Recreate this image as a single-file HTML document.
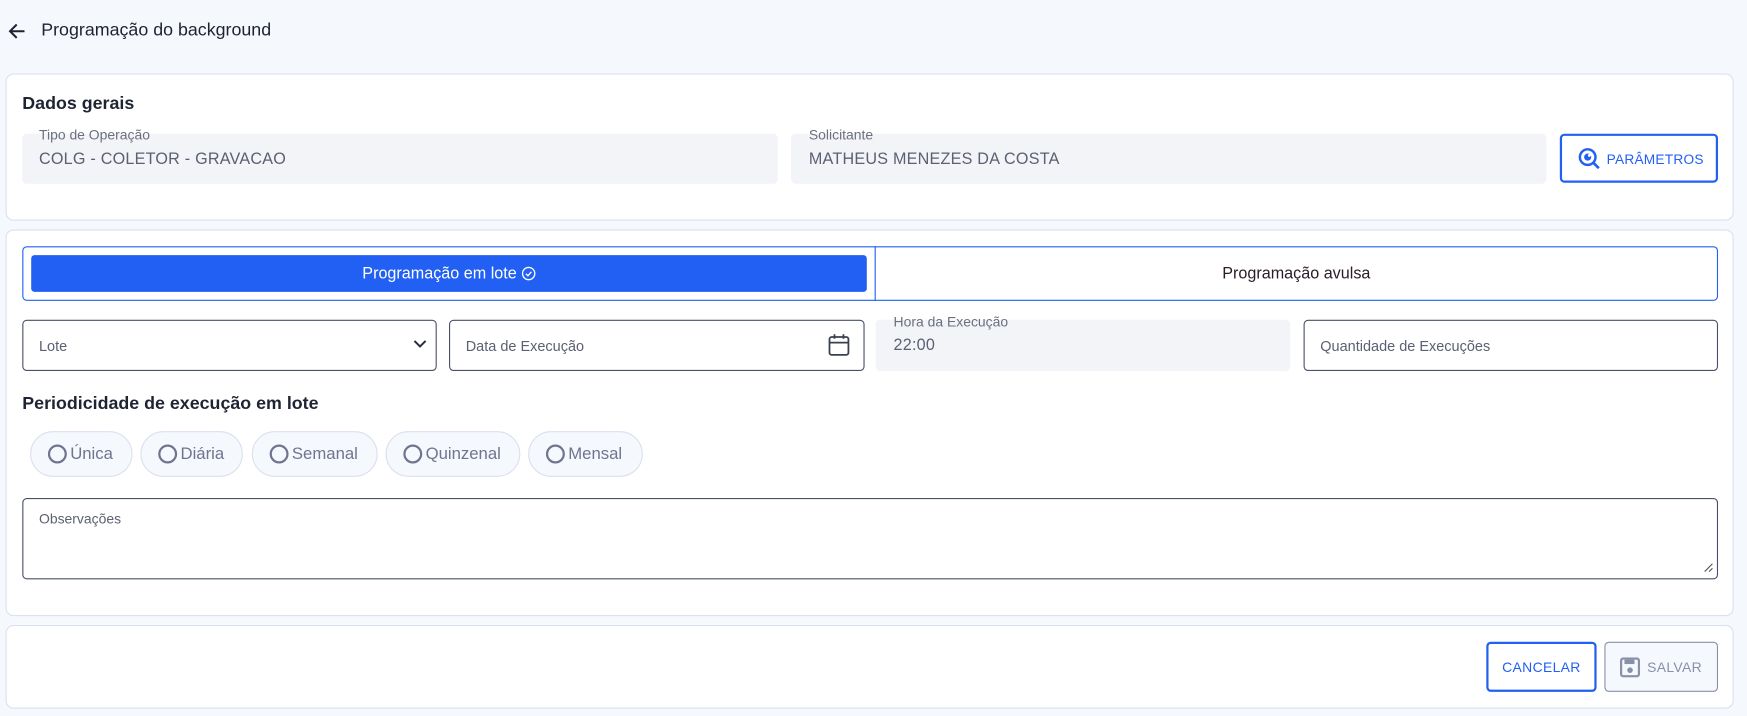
<!DOCTYPE html>
<html><head><meta charset="utf-8"><style>
*{box-sizing:border-box;margin:0;padding:0}
html,body{width:1747px;height:716px;overflow:hidden;background:#f5f8fd}
#w{position:absolute;left:0;top:0;width:1568px;height:643px;transform:scale(1.11416);transform-origin:0 0;font-family:"Liberation Sans",sans-serif;color:#1e2230}
.a{position:absolute}
.card{position:absolute;left:5px;width:1551px;background:#fff;border:1px solid #dbe1f0;border-radius:7px}
.h{font-size:16px;font-weight:bold;color:#1e2432}
.fill{background:#f3f4f8;border-radius:4px}
.lbl{font-size:12.5px;color:#6b7080}
.val{font-size:14.5px;color:#5b6072;letter-spacing:.2px}
.out{border:1px solid #4a5068;border-radius:4px;background:#fff}
.ph{font-size:13px;color:#5b6072}
.chip{position:absolute;top:387px;height:41px;border:1px solid #dbe0ef;border-radius:21px;background:#f5f8fd;font-size:15px;color:#6f7490;display:flex;align-items:center;padding-left:15px}
.chip i{display:inline-block;width:17px;height:17px;border:2px solid #6f7490;border-radius:50%;margin-right:3px}
</style></head><body><div id="w">
<svg class="a" style="left:7px;top:20px" width="16" height="16" viewBox="0 0 16 16"><path d="M15 8H2M8 2L2 8l6 6" fill="none" stroke="#1e2230" stroke-width="1.8"/></svg>
<div class="a" style="left:37px;top:19px;font-size:16px;color:#1e2230">Programação do background</div>

<div class="card" style="top:66px;height:132px"></div>
<div class="a h" style="left:20px;top:85px">Dados gerais</div>
<div class="a fill" style="left:20px;top:120px;width:678px;height:45px"></div>
<div class="a lbl" style="left:35px;top:114px">Tipo de Operação</div>
<div class="a val" style="left:35px;top:135px">COLG - COLETOR - GRAVACAO</div>
<div class="a fill" style="left:710px;top:120px;width:678px;height:45px"></div>
<div class="a lbl" style="left:726px;top:114px">Solicitante</div>
<div class="a val" style="left:726px;top:135px">MATHEUS MENEZES DA COSTA</div>
<div class="a" style="left:1400px;top:120px;width:142px;height:44px;border:2px solid #2160f3;border-radius:4px;background:#fff"></div>
<svg class="a" style="left:1416px;top:132px" width="22" height="22" viewBox="0 0 22 22"><circle cx="9" cy="9" r="7" fill="none" stroke="#2160f3" stroke-width="2.2"/><circle cx="9" cy="9" r="3.2" fill="#2160f3"/><circle cx="10.5" cy="7.5" r="1.3" fill="#fff"/><path d="M14 14l5 5" stroke="#2160f3" stroke-width="2.4"/></svg>
<div class="a" style="left:1442px;top:136px;font-size:12.3px;color:#2160f3;letter-spacing:.2px">PARÂMETROS</div>

<div class="card" style="top:206px;height:347px"></div>
<div class="a" style="left:20px;top:221px;width:1522px;height:49px;border:1px solid #2160f3;border-radius:4px"></div>
<div class="a" style="left:785px;top:221px;width:1px;height:49px;background:#2160f3"></div>
<div class="a" style="left:28px;top:229px;width:750px;height:33px;background:#2160f3;border-radius:3px;color:#fff;font-size:14.5px;display:flex;align-items:center;justify-content:center">Programação em lote&nbsp;<svg width="13" height="13" viewBox="0 0 13 13"><circle cx="6.5" cy="6.5" r="5.5" fill="none" stroke="#fff" stroke-width="1.2"/><path d="M4 6.7l1.8 1.8L9 5" fill="none" stroke="#fff" stroke-width="1.2"/></svg></div>
<div class="a" style="left:786px;top:229px;width:755px;height:33px;font-size:14.5px;color:#2a1c28;display:flex;align-items:center;justify-content:center">Programação avulsa</div>

<div class="a out" style="left:20px;top:287px;width:372px;height:46px"></div>
<div class="a ph" style="left:35px;top:303px">Lote</div>
<svg class="a" style="left:370px;top:304px" width="14" height="10" viewBox="0 0 14 10"><path d="M2 2l5 5 5-5" fill="none" stroke="#2a2f40" stroke-width="1.8"/></svg>
<div class="a out" style="left:403px;top:287px;width:373px;height:46px"></div>
<div class="a ph" style="left:418px;top:303px">Data de Execução</div>
<svg class="a" style="left:743px;top:299px" width="20" height="22" viewBox="0 0 20 22"><rect x="1.5" y="3.5" width="17" height="16" rx="2" fill="none" stroke="#3a3f52" stroke-width="1.6"/><path d="M1.5 8.5h17M6 1v4M14 1v4" stroke="#3a3f52" stroke-width="1.6"/></svg>
<div class="a fill" style="left:786px;top:287px;width:372px;height:46px"></div>
<div class="a lbl" style="left:802px;top:282px">Hora da Execução</div>
<div class="a val" style="left:802px;top:302px">22:00</div>
<div class="a out" style="left:1170px;top:287px;width:372px;height:46px"></div>
<div class="a ph" style="left:1185px;top:303px">Quantidade de Execuções</div>

<div class="a h" style="left:20px;top:354px">Periodicidade de execução em lote</div>
<div class="chip" style="left:27px;width:92px"><i></i>Única</div>
<div class="chip" style="left:126px;width:92px"><i></i>Diária</div>
<div class="chip" style="left:226px;width:113px"><i></i>Semanal</div>
<div class="chip" style="left:346px;width:121px"><i></i>Quinzenal</div>
<div class="chip" style="left:474px;width:103px"><i></i>Mensal</div>

<div class="a out" style="left:20px;top:447px;width:1522px;height:73px"></div>
<div class="a ph" style="left:35px;top:459px;font-size:12.5px">Observações</div>
<svg class="a" style="left:1529px;top:505px" width="9" height="9" viewBox="0 0 9 9"><path d="M1 8L8 1M5 8L8 5" stroke="#555" stroke-width="1"/></svg>

<div class="card" style="top:561px;height:75px"></div>
<div class="a" style="left:1334px;top:576px;width:99px;height:45px;border:2px solid #2160f3;border-radius:4px;background:#fff;color:#2160f3;font-size:12.5px;display:flex;align-items:center;justify-content:center;letter-spacing:.3px">CANCELAR</div>
<div class="a" style="left:1440px;top:576px;width:102px;height:45px;border:1px solid #8a90a8;border-radius:4px;background:#f5f8fd;color:#8a90a8;font-size:12.5px;display:flex;align-items:center;justify-content:center;letter-spacing:.3px"><svg width="18" height="18" viewBox="0 0 18 18" style="margin-right:6px"><rect x="1" y="1" width="16" height="16" rx="2" fill="none" stroke="#8a90a8" stroke-width="2"/><rect x="4" y="2" width="9" height="4" fill="#8a90a8"/><circle cx="9" cy="11.5" r="2.5" fill="#8a90a8"/></svg>SALVAR</div>
</div></body></html>
